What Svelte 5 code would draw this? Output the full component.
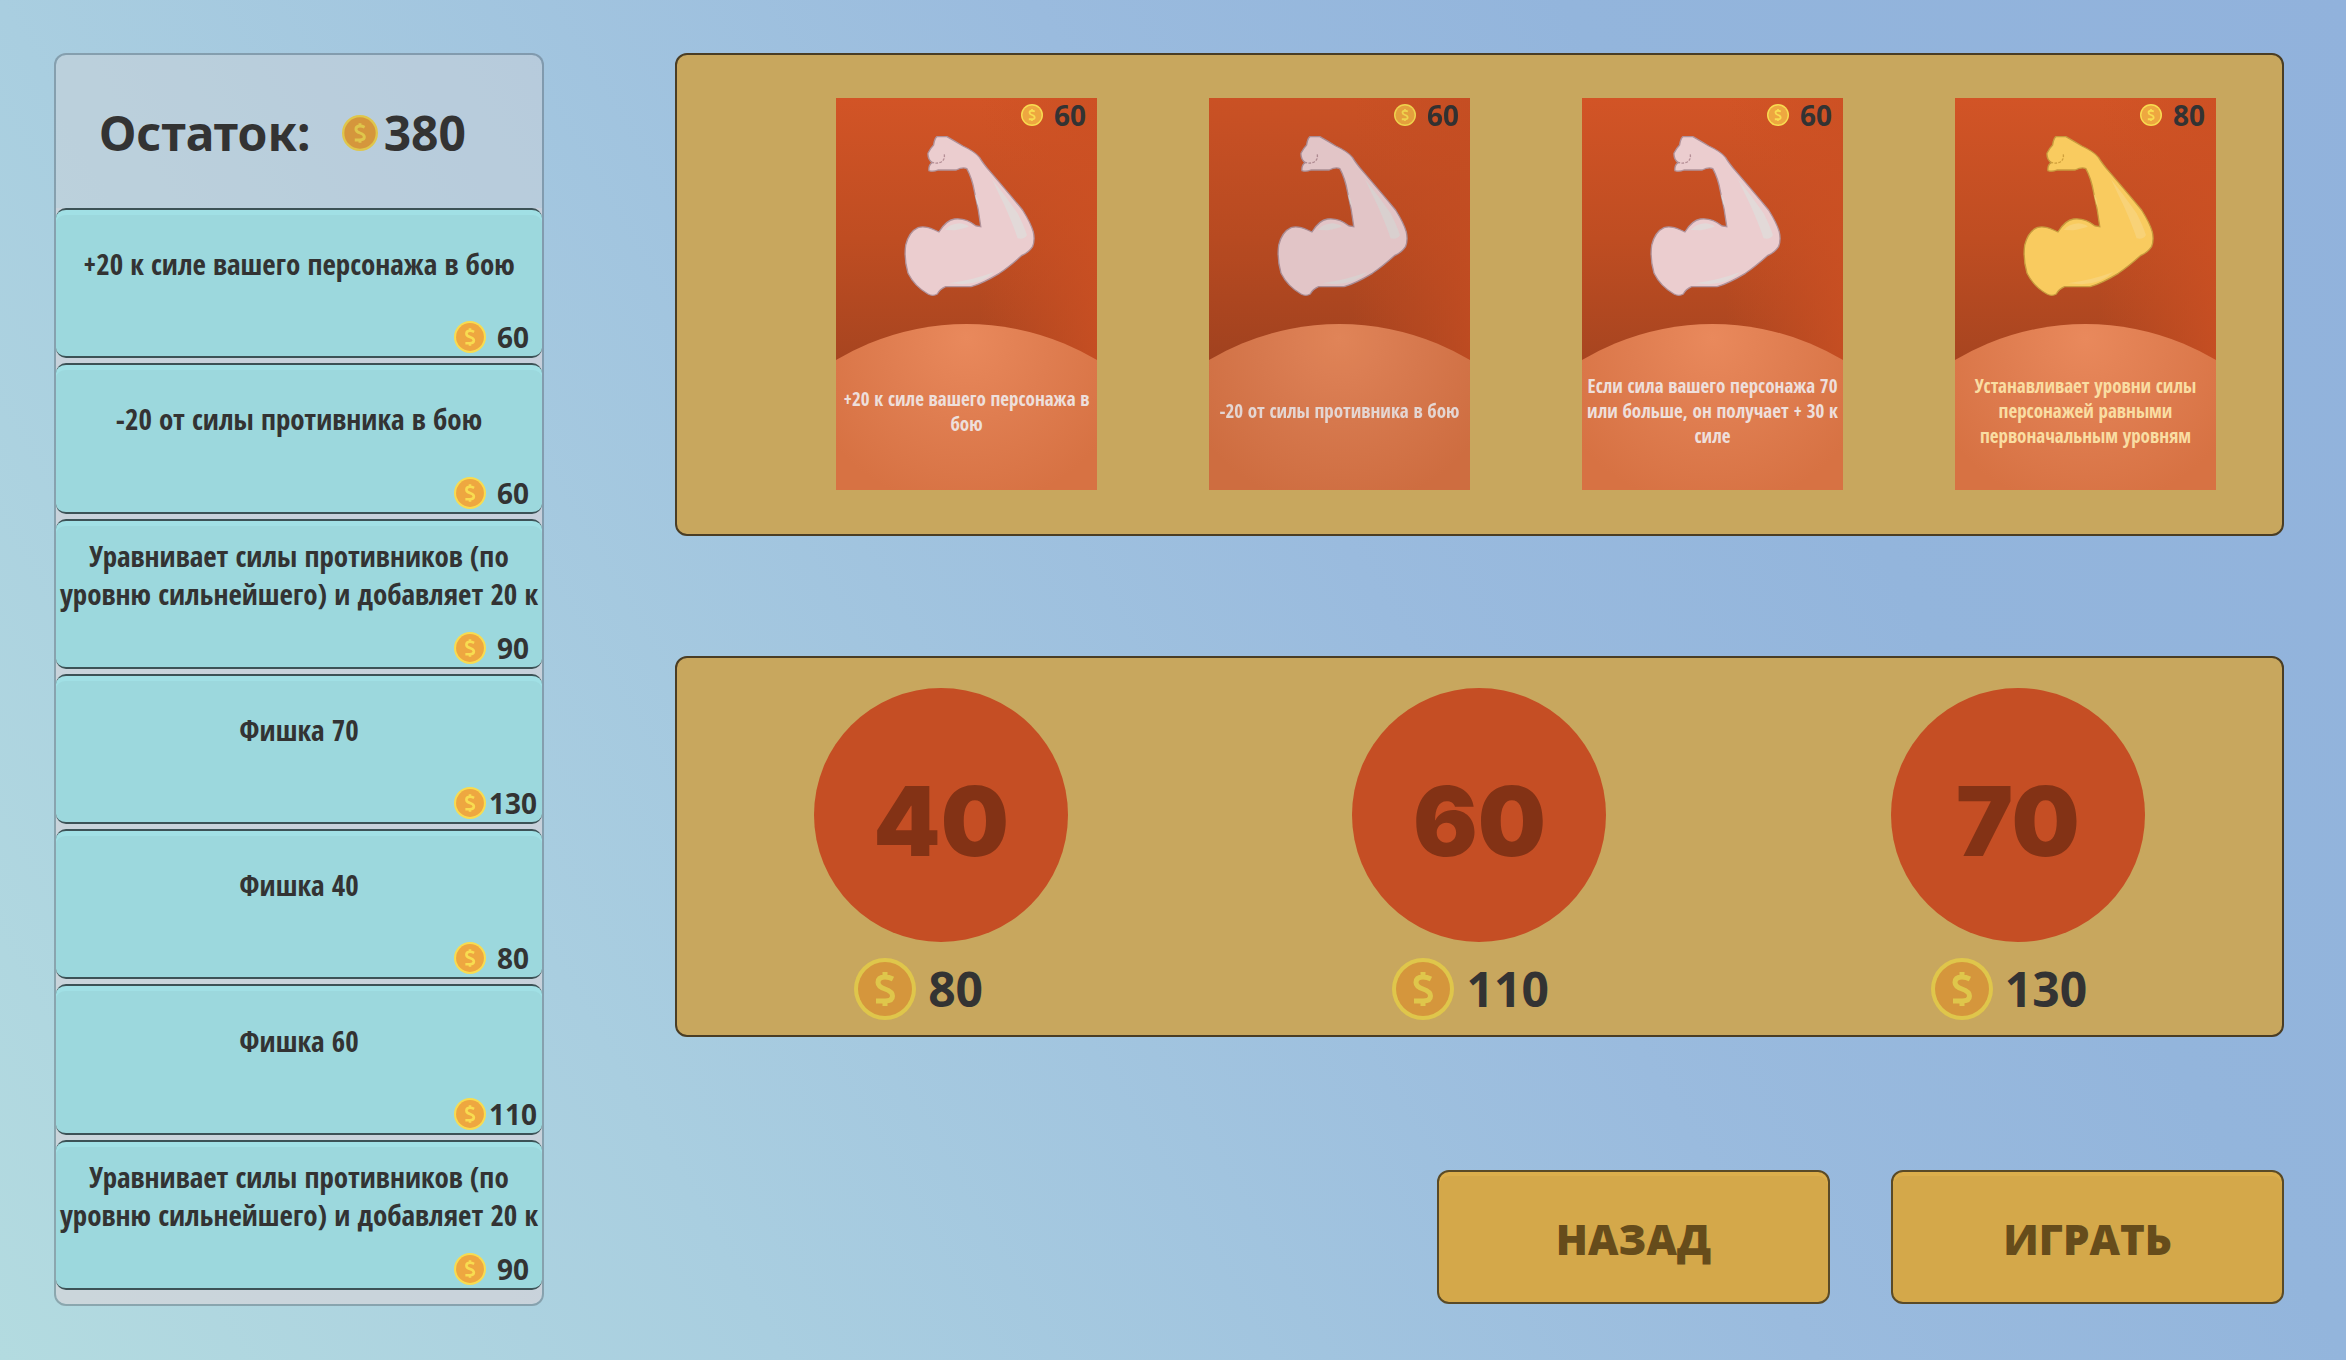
<script>
  const balance = 380;

  const purchases = [
    { lines: ['+20 к силе вашего персонажа в бою'], price: 60 },
    { lines: ['-20 от силы противника в бою'], price: 60 },
    { lines: ['Уравнивает силы противников (по', 'уровню сильнейшего) и добавляет 20 к'], price: 90 },
    { lines: ['Фишка 70'], price: 130 },
    { lines: ['Фишка 40'], price: 80 },
    { lines: ['Фишка 60'], price: 110 },
    { lines: ['Уравнивает силы противников (по', 'уровню сильнейшего) и добавляет 20 к'], price: 90 },
  ];

  const cards = [
    { lines: ['+20 к силе вашего персонажа в', 'бою'], price: 60 },
    { lines: ['-20 от силы противника в бою'], price: 60, active: true },
    { lines: ['Если сила вашего персонажа 70', 'или больше, он получает + 30 к', 'силе'], price: 60 },
    { lines: ['Устанавливает уровни силы', 'персонажей равными', 'первоначальным уровням'], price: 80, gold: true },
  ];

  const chips = [
    { power: 40, price: 80 },
    { power: 60, price: 110 },
    { power: 70, price: 130 },
  ];
</script>

{#snippet coin(kind)}
  <svg class="coin {kind}" viewBox="0 0 62 62" aria-hidden="true">
    <circle class="rim" cx="31" cy="31" r="31" />
    <circle class="face" cx="31" cy="31" r="27" />
    <path class="sign" d="M39 21 Q35 19 31 19 Q24 19 24 24.500 Q24 28.500 31 31 Q38.500 33.500 38.500 38 Q38.500 43 31 43 Q26 43 22 43 M31 14 V19 M31 43 V48" />
  </svg>
{/snippet}

<main>
  <aside>
    <h1>Остаток: <span class="sum">{@render coin('muted')}{balance}</span></h1>
    <ul>
      {#each purchases as item}
        <li>
          <button class="item">
            <span class="name">{item.lines.join('\n')}</span>
            <span class="cost">{@render coin('bright')}<b>{item.price}</b></span>
          </button>
        </li>
      {/each}
    </ul>
  </aside>

  <div class="shop">
    <section class="panel cards">
      {#each cards as card}
        <button class="card" class:active={card.active} class:gold={card.gold}>
          <svg class="art" viewBox="0 0 262 392" preserveAspectRatio="none" aria-hidden="true">
            <defs>
              <linearGradient id="sky" x1="0" y1="0" x2="0" y2="1">
                <stop offset="0" stop-color="#d25426" />
                <stop offset="0.360" stop-color="#bf4d22" />
                <stop offset="0.660" stop-color="#a84520" />
              </linearGradient>
              <linearGradient id="glow" x1="0" y1="0" x2="1" y2="0">
                <stop offset="0.550" stop-color="#cc5023" stop-opacity="0" />
                <stop offset="1" stop-color="#cc5023" stop-opacity="0.800" />
              </linearGradient>
              <radialGradient id="hill" gradientUnits="userSpaceOnUse" cx="131" cy="240" r="170">
                <stop offset="0" stop-color="#e9895c" />
                <stop offset="0.500" stop-color="#df7d50" />
                <stop offset="1" stop-color="#d77243" />
              </radialGradient>
            </defs>
            <rect width="262" height="392" fill="url(#sky)" />
            <rect width="262" height="392" fill="url(#glow)" />
            <circle cx="131" cy="482" r="256" fill="url(#hill)" />
            <g transform="translate(24 22) scale(.3333)">
              <path class="arm" d="M232 50 L262 50 Q290 66 310 78 Q345 94 360 112 Q372 132 395 158 Q450 222 490 270 Q515 310 522 335 Q528 360 520 380 Q508 398 488 406 Q450 440 420 460 Q370 490 335 500 L258 500 Q240 508 233 522 Q220 530 205 522 Q165 500 145 460 Q132 415 138 375 Q148 335 175 323 Q195 316 225 330 L238 336 Q260 300 285 297 Q320 293 350 318 L364 320 Q358 270 345 215 Q338 175 322 146 Q310 140 290 150 L235 150 Q222 156 208 152 Q206 135 218 128 Q204 118 205 100 Q212 85 222 75 Q225 55 232 50Z" />
              <path class="shine" d="M398 178 Q440 230 475 280 Q495 320 503 345 Q495 360 475 355 Q460 310 435 255 Q415 215 398 178Z M255 330 Q270 312 300 310 Q320 312 328 320 Q300 328 285 331Z M268 490 Q340 480 405 456 Q370 490 310 493Z M346 222 Q356 232 358 262 Q352 250 346 222Z" />
              <path class="knuckle" d="M254 103 Q257 118 245 126 Q232 132 218 127" />
            </g>
          </svg>
          <span class="tag">{@render coin('bright')}<b>{card.price}</b></span>
          <span class="text">{card.lines.join('\n')}</span>
        </button>
      {/each}
    </section>

    <section class="panel chips">
      {#each chips as chip}
        <div class="chip">
          <button class="disc">{chip.power}</button>
          <span class="price">{@render coin('muted')}<b>{chip.price}</b></span>
        </div>
      {/each}
    </section>

    <nav>
      <button class="action">НАЗАД</button>
      <button class="action">ИГРАТЬ</button>
    </nav>
  </div>
</main>

<style>
  :global(body) {
    margin: 0;
  }
  main {
    box-sizing: border-box;
    min-height: 100vh;
    padding: 53px 62px 54px 54px;
    display: grid;
    grid-template-columns: 490px 1fr;
    gap: 131px;
    background: linear-gradient(60deg, #b3dbe0 0%, #a9cee0 25%, #9abbde 58%, #93b5dc 75%, #91b2dc 100%);
    font-family: 'Noto Sans', 'Open Sans', sans-serif;
    color: #333;
  }
  button {
    margin: 0;
    padding: 0;
    border: 0;
    background: none;
    font: inherit;
    color: inherit;
    cursor: pointer;
  }
  .coin {
    display: block;
    flex: none;
  }
  .bright .rim { fill: #f8dc50; }
  .bright .face { fill: #eea740; }
  .bright .sign { stroke: #f8dc50; }
  .muted .rim { fill: #dfc64b; }
  .muted .face { fill: #d5963c; }
  .muted .sign { stroke: #dfc64b; }
  .sign {
    fill: none;
    stroke-width: 5;
  }

  aside {
    display: flex;
    flex-direction: column;
    box-sizing: border-box;
    border: 2px solid rgba(80, 90, 100, 0.4);
    border-radius: 12px;
    overflow: hidden;
    background: rgba(214, 212, 214, 0.4);
    background-clip: padding-box;
  }
  h1 {
    box-sizing: border-box;
    margin: 0;
    height: 153px;
    padding: 3px 76px 0 43px;
    display: flex;
    align-items: center;
    justify-content: space-between;
    font-size: 48px;
    line-height: 60px;
  }
  .sum {
    display: flex;
    align-items: center;
    gap: 6px;
  }
  .sum .coin {
    width: 36px;
    height: 36px;
  }
  ul {
    flex: 1;
    margin: 0;
    padding: 0 0 14px;
    list-style: none;
    display: grid;
    grid-auto-rows: 1fr;
    gap: 5px;
    background: rgba(224, 212, 218, 0.35);
  }
  li {
    display: grid;
  }
  .item {
    display: flex;
    flex-direction: column;
    border: solid #3c5256;
    border-width: 2px 0;
    border-radius: 10px;
    background: #9cd8dd;
    box-shadow: inset 0 5px 0 #a1e0e5;
  }
  .name {
    flex: 1;
    align-self: stretch;
    display: flex;
    align-items: center;
    justify-content: center;
    font: 700 29px/38px 'Open Sans Condensed', 'Roboto Condensed', sans-serif;
    white-space: pre;
  }
  .cost {
    align-self: flex-end;
    height: 38px;
    padding-right: 4px;
    display: flex;
    align-items: center;
    gap: 2px;
    font-size: 28px;
    line-height: 32px;
  }
  .cost .coin {
    width: 32px;
    height: 32px;
  }
  .cost b {
    width: 50px;
    text-align: center;
  }

  .shop {
    display: flex;
    flex-direction: column;
  }
  .panel {
    border: 2px solid #4a3d24;
    border-radius: 12px;
    background: #c8a75e;
  }
  .cards {
    display: flex;
    justify-content: space-between;
    padding: 43px 66px 44px 159px;
  }
  .card {
    position: relative;
    width: 261px;
    height: 392px;
  }
  .active {
    filter: brightness(0.96);
  }
  .art {
    display: block;
    width: 100%;
    height: 100%;
  }
  .arm {
    fill: #ebcdcf;
    stroke: #b0929a;
    stroke-width: 4;
  }
  .shine { fill: #e2d9d8; }
  .knuckle {
    fill: none;
    stroke: #b58f96;
    stroke-width: 4;
    stroke-dasharray: 8 4;
  }
  .gold .arm {
    fill: #f9cb5f;
    stroke: #c79b3e;
  }
  .gold .shine { fill: #f8d277; }
  .gold .knuckle { stroke: #d0a03c; }
  .tag {
    position: absolute;
    top: 0;
    right: 11px;
    display: flex;
    align-items: center;
    gap: 11px;
    font-size: 28px;
    line-height: 34px;
  }
  .tag .coin {
    width: 22px;
    height: 22px;
  }
  .text {
    position: absolute;
    inset: 235px 0 0;
    display: flex;
    align-items: center;
    justify-content: center;
    font: 700 19px/25px 'Open Sans Condensed', 'Roboto Condensed', sans-serif;
    white-space: pre;
    color: #eedfdb;
  }
  .gold .text { color: #f9dda2; }

  .chips {
    margin-top: 120px;
    padding: 30px 0 15px;
    display: grid;
    grid-template-columns: repeat(3, 1fr);
    gap: 10px;
  }
  .chip {
    display: flex;
    flex-direction: column;
    align-items: center;
    gap: 16px;
  }
  .disc {
    width: 254px;
    height: 254px;
    padding-top: 12px;
    border-radius: 50%;
    background: #c54e24;
    color: #833215;
    font: 900 96px/100px Inter, sans-serif;
  }
  .price {
    width: 174px;
    display: flex;
    align-items: center;
    gap: 12px;
    font-size: 48px;
    line-height: 60px;
  }
  .price .coin {
    width: 62px;
    height: 62px;
  }

  nav {
    margin-top: 133px;
    display: flex;
    justify-content: flex-end;
    gap: 61px;
  }
  .action {
    box-sizing: border-box;
    width: 393px;
    height: 134px;
    border: 2px solid #5a4a26;
    border-radius: 12px;
    background: #d4a84a;
    box-shadow: inset 0 4px 0 #dcae4c;
    padding-top: 4px;
    font: 800 42px/50px 'Open Sans', sans-serif;
    color: #664c1b;
  }
</style>
